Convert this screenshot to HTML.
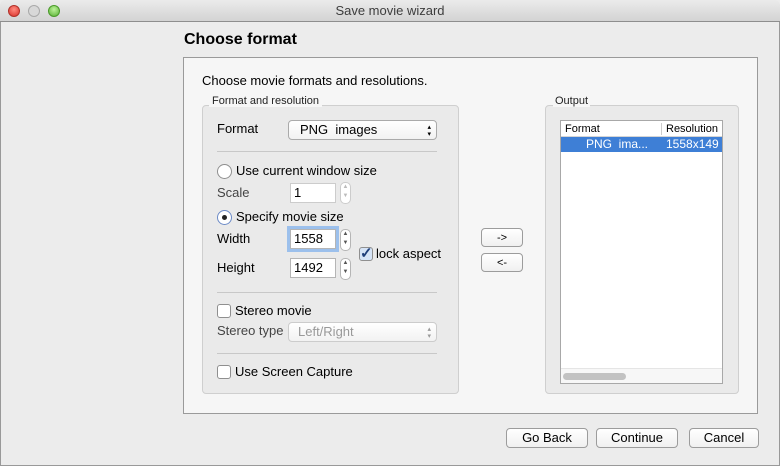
<!DOCTYPE html><html><head><style>
*{box-sizing:border-box;margin:0;padding:0}
body{width:780px;height:466px;background:#ececec;font-family:"Liberation Sans",sans-serif;font-size:13px;color:#000;position:relative;overflow:hidden}
.a{position:absolute}
.tb{left:0;top:0;width:780px;height:22px;background:linear-gradient(#ebebeb,#d3d3d3);border-bottom:1px solid #8e8e8e;text-align:center;line-height:22px;color:#3d3d3d;font-size:13px;border-radius:5px 5px 0 0}
.dot{top:5px;width:12px;height:12px;border-radius:50%}
.panel{left:183px;top:57px;width:575px;height:357px;background:#f6f6f6;border:1px solid #9a9a9a}
.grp{background:#eaeaea;border:1px solid #cfcfcf;border-radius:4px}
.lbl{font-size:11px;color:#222}
.btn{background:linear-gradient(#fff,#f0f0f0);border:1px solid #9c9c9c;border-radius:4px;text-align:center;font-size:13px;height:20px;line-height:18px}
.sep{height:1px;background:#c8c8c8}
.inp{background:#fff;border:1px solid #b5b5b5;height:20px;line-height:18px;padding-left:3px}
.step{width:11px;height:22px;border:1px solid #b5b5b5;border-radius:5px;background:#fff;font-size:6px;line-height:9px;text-align:center;color:#555}
.cb{width:14px;height:14px;border:1px solid #8f8f8f;border-radius:3px;background:#fff}
.rd{width:15px;height:15px;border:1px solid #8f8f8f;border-radius:50%;background:#fff}
.sel{background:linear-gradient(#fff,#f2f2f2);border:1px solid #aaa;border-radius:4px;height:20px;line-height:18px;padding-left:11px}
</style></head><body>
<div class="a tb">Save movie wizard</div>
<div class="a dot" style="left:8px;background:radial-gradient(circle at 50% 35%,#ff8c80,#d9302a);border:1px solid #b0322a"></div>
<div class="a dot" style="left:28px;background:#d8d8d8;border:1px solid #a9a9a9"></div>
<div class="a dot" style="left:48px;background:radial-gradient(circle at 50% 35%,#bdf39a,#57b032);border:1px solid #4a9a2a"></div>
<div class="a" style="left:0;top:22px;width:1px;height:444px;background:#999"></div>
<div class="a" style="left:779px;top:22px;width:1px;height:444px;background:#999"></div>
<div class="a" style="left:0;top:465px;width:780px;height:1px;background:#999"></div>
<div class="a" style="left:184px;top:31px;font-size:16px;font-weight:bold">Choose format</div>
<div class="a panel"></div>
<div class="a" style="left:202px;top:73px">Choose movie formats and resolutions.</div>
<div class="a grp" style="left:202px;top:105px;width:257px;height:289px"></div>
<div class="a lbl" style="left:209px;top:95px;background:#f6f6f6;padding:0 3px">Format and resolution</div>
<div class="a" style="left:217px;top:121px">Format</div>
<div class="a sel" style="left:288px;top:120px;width:149px">PNG&nbsp; images<span style="position:absolute;right:5px;top:0;font-size:7px;line-height:7px;top:3px">▴<br>▾</span></div>
<div class="a sep" style="left:217px;top:151px;width:220px"></div>
<div class="a rd" style="left:217px;top:164px"></div>
<div class="a" style="left:236px;top:163px">Use current window size</div>
<div class="a" style="left:217px;top:185px;color:#444">Scale</div>
<div class="a inp" style="left:290px;top:183px;width:46px;border-color:#ccc">1</div>
<div class="a step" style="left:340px;top:182px;color:#bbb;border-color:#ccc">▲<br>▼</div>
<div class="a rd" style="left:217px;top:210px;border-color:#6b8ac6"><div style="margin:4px auto;width:5px;height:5px;border-radius:50%;background:#222"></div></div>
<div class="a" style="left:236px;top:209px">Specify movie size</div>
<div class="a" style="left:217px;top:231px">Width</div>
<div class="a inp" style="left:290px;top:229px;width:46px;box-shadow:0 0 0 3px #9cc0ec">1558</div>
<div class="a step" style="left:340px;top:229px">▲<br>▼</div>
<div class="a cb" style="left:359px;top:247px;color:#1f3f7a;font-weight:bold;font-size:15px;line-height:12px;background:#d6e4f7">✓</div>
<div class="a" style="left:376px;top:246px">lock aspect</div>
<div class="a" style="left:217px;top:260px">Height</div>
<div class="a inp" style="left:290px;top:258px;width:46px">1492</div>
<div class="a step" style="left:340px;top:258px">▲<br>▼</div>
<div class="a sep" style="left:217px;top:292px;width:220px"></div>
<div class="a cb" style="left:217px;top:304px"></div>
<div class="a" style="left:235px;top:303px">Stereo movie</div>
<div class="a" style="left:217px;top:323px;color:#444">Stereo type</div>
<div class="a sel" style="left:288px;top:322px;width:149px;color:#999;border-color:#ccc;padding-left:9px">Left/Right<span style="position:absolute;right:5px;top:3px;font-size:7px;line-height:7px">▴<br>▾</span></div>
<div class="a sep" style="left:217px;top:353px;width:220px"></div>
<div class="a cb" style="left:217px;top:365px"></div>
<div class="a" style="left:235px;top:364px">Use Screen Capture</div>
<div class="a btn" style="left:481px;top:228px;width:42px;height:19px;font-size:11px">-&gt;</div>
<div class="a btn" style="left:481px;top:253px;width:42px;height:19px;font-size:11px">&lt;-</div>
<div class="a grp" style="left:545px;top:105px;width:194px;height:289px"></div>
<div class="a lbl" style="left:553px;top:95px;background:#f6f6f6;padding:0 2px">Output</div>
<div class="a" style="left:560px;top:120px;width:163px;height:264px;background:#fff;border:1px solid #a8a8a8;overflow:hidden">
<div style="height:16px;border-bottom:1px solid #d5d5d5;font-size:11px;line-height:16px;padding-left:4px;position:relative">Format<span style="position:absolute;left:100px;top:2px;height:12px;border-left:1px solid #ccc;padding-left:4px;line-height:12px">Resolution</span></div>
<div style="height:15px;background:#3e7fd6;color:#fff;font-size:12px;line-height:15px;white-space:nowrap;position:relative"><span style="position:absolute;left:25px">PNG&nbsp; ima...</span><span style="position:absolute;left:105px">1558x149</span></div>
<div style="position:absolute;left:0;bottom:0;width:161px;height:15px;background:#f7f7f7;border-top:1px solid #e5e5e5"><div style="margin:4px 0 0 2px;width:63px;height:7px;border-radius:4px;background:#c2c2c2"></div></div>
</div>
<div class="a btn" style="left:506px;top:428px;width:82px">Go Back</div>
<div class="a btn" style="left:596px;top:428px;width:82px">Continue</div>
<div class="a btn" style="left:689px;top:428px;width:70px">Cancel</div>
</body></html>
